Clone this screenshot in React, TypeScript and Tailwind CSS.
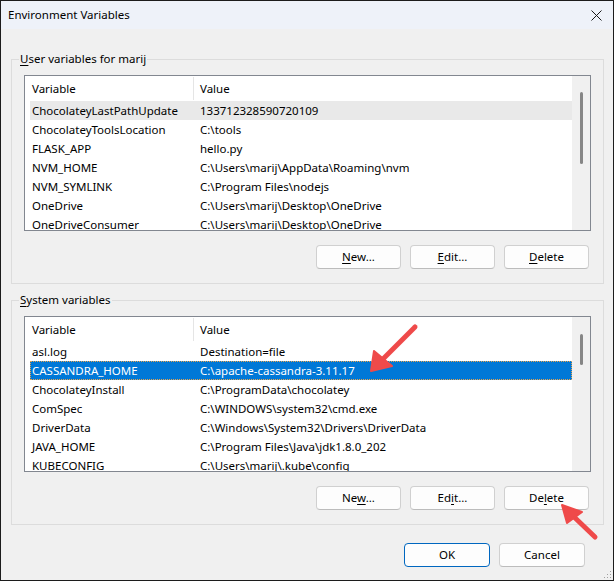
import React from 'react';

type Row = [string, string];

const userVars: Row[] = [
  ['ChocolateyLastPathUpdate', '133712328590720109'],
  ['ChocolateyToolsLocation', 'C:\\tools'],
  ['FLASK_APP', 'hello.py'],
  ['NVM_HOME', 'C:\\Users\\marij\\AppData\\Roaming\\nvm'],
  ['NVM_SYMLINK', 'C:\\Program Files\\nodejs'],
  ['OneDrive', 'C:\\Users\\marij\\Desktop\\OneDrive'],
  ['OneDriveConsumer', 'C:\\Users\\marij\\Desktop\\OneDrive'],
];

const systemVars: Row[] = [
  ['asl.log', 'Destination=file'],
  ['CASSANDRA_HOME', 'C:\\apache-cassandra-3.11.17'],
  ['ChocolateyInstall', 'C:\\ProgramData\\chocolatey'],
  ['ComSpec', 'C:\\WINDOWS\\system32\\cmd.exe'],
  ['DriverData', 'C:\\Windows\\System32\\Drivers\\DriverData'],
  ['JAVA_HOME', 'C:\\Program Files\\Java\\jdk1.8.0_202'],
  ['KUBECONFIG', 'C:\\Users\\marij\\.kube\\config'],
];

function Key({ children }: { children: React.ReactNode }) {
  return <span className="underline underline-offset-[2px]">{children}</span>;
}

function Button({
  children,
  primary,
  wide,
}: {
  children: React.ReactNode;
  primary?: boolean;
  wide?: boolean;
}) {
  const width = wide ? 'w-[86px]' : 'w-[85px]';
  const border = primary ? 'border-[#0067c0]' : 'border-[#d0d0d0] border-b-[#bcbcbc]';
  return (
    <button className={`${width} h-[24px] rounded-[4px] border ${border} bg-[#fdfdfd] text-black`}>
      {children}
    </button>
  );
}

function VarList({
  rows,
  hovered,
  selected,
  thumbTop,
  thumbHeight,
}: {
  rows: Row[];
  hovered?: number;
  selected?: number;
  thumbTop: string;
  thumbHeight: string;
}) {
  return (
    <div className="w-[567px] h-[156px] border border-[#828790] bg-white flex overflow-hidden">
      <div className="w-[547px] flex flex-col">
        {/* Column header */}
        <div className="h-[25px] shrink-0 flex items-center">
          <div className="w-[168px] pl-[7px]">Variable</div>
          <div className="w-px h-[23px] bg-[#e5e5e5]" />
          <div className="pl-[6px]">Value</div>
        </div>
        <div className="ml-[5px] w-[542px] flex flex-col">
          {rows.map(([name, value], i) => (
            <div
              key={name}
              className={
                i === selected
                  ? 'h-[19px] shrink-0 flex items-center bg-[#0078d7] text-white outline-1 outline-dotted outline-[#e9a34c] -outline-offset-1'
                  : i === hovered
                    ? 'h-[19px] shrink-0 flex items-center bg-[#e9e9e9]'
                    : 'h-[19px] shrink-0 flex items-center'
              }
            >
              <div className="w-[163px] pl-[2px] whitespace-nowrap">{name}</div>
              <div className="pl-[7px] whitespace-nowrap">{value}</div>
            </div>
          ))}
        </div>
      </div>
      {/* Vertical scrollbar */}
      <div className={`w-[18px] bg-[#f0f0f0] pl-[8px] ${thumbTop}`}>
        <div className={`w-[3px] rounded-full bg-[#868686] ${thumbHeight}`} />
      </div>
    </div>
  );
}

function GroupBox({
  title,
  children,
}: {
  title: React.ReactNode;
  children: React.ReactNode;
}) {
  return (
    <div className="relative w-[593px] border border-[#dcdcdc] pt-[15px] pl-[12px] pb-[14px]">
      <div className="absolute -top-[9px] left-[7px] px-[1px] leading-[16px] bg-[#f0f0f0]">{title}</div>
      {children}
    </div>
  );
}

export default function App() {
  return (
    <div className="relative w-[614px] h-[581px] border border-[#1c1c1c] bg-[#f0f0f0] flex flex-col text-[11.5px] text-black font-['Noto_Sans',sans-serif] overflow-hidden">
      {/* Title bar */}
      <div className="h-[28px] shrink-0 flex items-center justify-between pl-[7px] pr-[11px] bg-[#eef2f9]">
        <span>Environment Variables</span>
        <svg width="11" height="11" viewBox="0 0 11 11">
          <path d="M0.5 0.5 L10.5 10.5 M10.5 0.5 L0.5 10.5" stroke="#1a1a1a" strokeWidth="1" />
        </svg>
      </div>

      <div className="flex flex-col pl-[10px] pt-[30px]">
        <GroupBox
          title={
            <>
              <Key>U</Key>ser variables for marij
            </>
          }
        >
          <VarList rows={userVars} hovered={0} thumbTop="pt-[16px]" thumbHeight="h-[72px]" />
          <div className="w-[567px] mt-[14px] flex justify-end gap-[9px] pr-[2px]">
            <Button>
              <Key>N</Key>ew...
            </Button>
            <Button>
              <Key>E</Key>dit...
            </Button>
            <Button>
              <Key>D</Key>elete
            </Button>
          </div>
        </GroupBox>

        <div className="mt-[16px]">
          <GroupBox
            title={
              <>
                <Key>S</Key>ystem variables
              </>
            }
          >
            <VarList rows={systemVars} selected={1} thumbTop="pt-[17px]" thumbHeight="h-[31px]" />
            <div className="w-[567px] mt-[14px] flex justify-end gap-[9px] pr-[2px]">
              <Button>
                Ne<Key>w</Key>...
              </Button>
              <Button>
                Ed<Key>i</Key>t...
              </Button>
              <Button>
                De<Key>l</Key>ete
              </Button>
            </div>
          </GroupBox>
        </div>

        <div className="mt-[18px] flex justify-end gap-[9px] pr-[28px]">
          <Button primary wide>
            OK
          </Button>
          <Button wide>Cancel</Button>
        </div>
      </div>

      {/* Resize grip */}
      <svg className="absolute right-[1px] bottom-[1px]" width="10" height="10" viewBox="0 0 10 10">
        <g fill="#a0a0a0">
          <rect x="8" y="2" width="1" height="1" />
          <rect x="5" y="5" width="1" height="1" />
          <rect x="8" y="5" width="1" height="1" />
          <rect x="2" y="8" width="1" height="1" />
          <rect x="5" y="8" width="1" height="1" />
          <rect x="8" y="8" width="1" height="1" />
        </g>
      </svg>

      {/* Annotation arrows */}
      <svg className="absolute left-[-1px] top-[-1px] pointer-events-none" width="614" height="581" viewBox="0 0 614 581">
        <g stroke="#ef4a4a" strokeWidth="5" strokeLinecap="round" fill="#ef4a4a">
          <line x1="415" y1="327" x2="381" y2="361" />
          <line x1="595" y1="537" x2="571" y2="514" />
        </g>
        <g fill="#ef4a4a" stroke="#ef4a4a" strokeWidth="2" strokeLinejoin="round">
          <polygon points="371,371 374,351 392,366" />
          <polygon points="562,505 567,523 582,512" />
        </g>
      </svg>
    </div>
  );
}
